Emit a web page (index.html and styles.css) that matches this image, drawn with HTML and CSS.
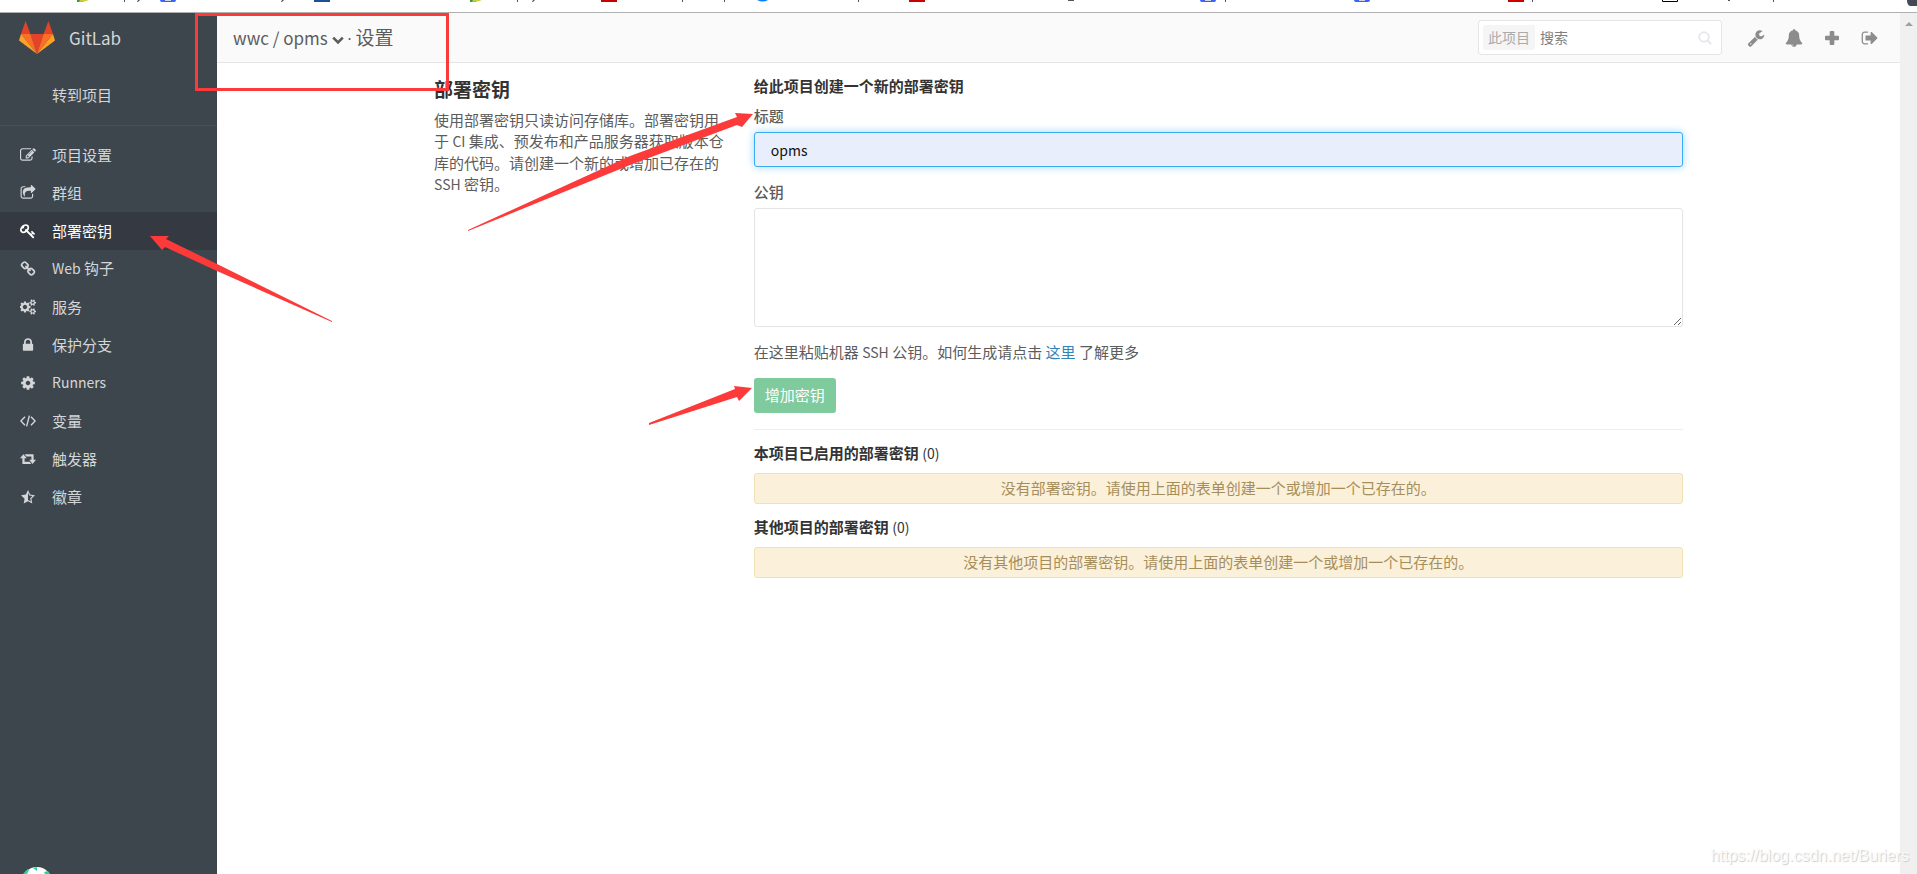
FILE: index.html
```html
<!DOCTYPE html>
<html lang="zh-CN">
<head>
<meta charset="utf-8">
<title>部署密钥 · GitLab</title>
<link rel="stylesheet" href="styles.css">
</head>
<body>
<svg class="defs" aria-hidden="true">
  <symbol id="edit" viewBox="0 0 1792 1792"><path d="M888 1184l116-116-152-152-116 116v56h96v96h56zm440-720q-16-16-33 1l-350 350q-17 17-1 33t33-1l350-350q17-17 1-33zm80 594v190q0 119-84.500 203.500t-203.500 84.500h-832q-119 0-203.500-84.500t-84.500-203.500v-832q0-119 84.500-203.500t203.500-84.500h832q63 0 117 25 15 7 18 23 3 17-9 29l-49 49q-14 14-32 8-23-6-45-6h-832q-66 0-113 47t-47 113v832q0 66 47 113t113 47h832q66 0 113-47t47-113v-126q0-13 9-22l64-64q15-15 35-7t20 29zm-96-738l288 288-672 672h-288v-288zm444 132l-92 92-288-288 92-92q28-28 68-28t68 28l152 152q28 28 28 68t-28 68z"/></symbol>
  <symbol id="share" viewBox="0 0 1792 1792"><path d="M1472 989v259q0 119-84.500 203.500t-203.500 84.500h-832q-119 0-203.500-84.500t-84.500-203.500v-832q0-119 84.500-203.500t203.500-84.500h255q13 0 22.500 9.500t9.500 22.500q0 27-26 32-77 26-133 60-10 4-16 4h-112q-66 0-113 47t-47 113v832q0 66 47 113t113 47h832q66 0 113-47t47-113v-214q0-19 18-29 28-13 54-37 16-16 35-8 21 9 21 29zm237-496l-384 384q-18 19-45 19-12 0-25-5-39-17-39-59v-192h-160q-323 0-438 131-119 137-74 473 3 23-20 34-8 2-12 2-16 0-26-13-10-14-21-31t-39.500-68.500-49.500-99.500-38.500-114-17.500-122q0-49 3.500-91t14-90 28-88 47-81.500 68.500-74 94.500-61.500 124.500-48.500 159.500-30.500 196.500-11h160v-192q0-42 39-59 13-5 25-5 26 0 45 19l384 384q19 19 19 45t-19 45z"/></symbol>
  <symbol id="key" viewBox="0 0 1792 1792"><path d="M832 512q0-80-56-136t-136-56-136 56-56 136q0 42 19 83-41-19-83-19-80 0-136 56t-56 136 56 136 136 56 136-56 56-136q0-42-19-83 41 19 83 19 80 0 136-56t56-136zm851 704q0 17-49 66t-66 49q-9 0-28.500-16t-36.500-33-38.500-40-24.500-26l-96 96 220 220q28 28 28 68 0 42-39 81t-81 39q-40 0-68-28l-671-671q-176 131-365 131-163 0-265.500-102.500t-102.500-265.500q0-160 95-313t248-248 313-95q163 0 265.500 102.500t102.500 265.500q0 189-131 365l355 355 96-96q-3-3-26-24.500t-40-38.500-33-36.500-16-28.500q0-17 49-66t66-49q13 0 23 10 6 6 46 44.500t82 79.500 86.500 86 73 78 28.500 41z"/></symbol>
  <symbol id="link" viewBox="0 0 1792 1792"><path d="M1520 1216q0-40-28-68l-208-208q-28-28-68-28-42 0-72 32 3 3 19 18.500t21.500 21.500 15 19 13 25.500 3.500 27.500q0 40-28 68t-68 28q-15 0-27.500-3.500t-25.500-13-19-15-21.500-21.500-18.500-19q-33 31-33 73 0 40 28 68l206 207q27 27 68 27 40 0 68-26l147-146q28-28 28-67zm-703-705q0-40-28-68l-206-207q-28-28-68-28-39 0-68 27l-147 146q-28 28-28 67 0 40 28 68l208 208q27 27 68 27 42 0 72-31-3-3-19-18.500t-21.500-21.500-15-19-13-25.500-3.500-27.500q0-40 28-68t68-28q15 0 27.500 3.500t25.500 13 19 15 21.500 21.500 18.500 19q33-31 33-73zm895 705q0 120-85 203l-147 146q-83 83-203 83-121 0-204-85l-206-207q-83-83-83-203 0-123 88-209l-88-88q-86 88-208 88-120 0-204-84l-208-208q-84-84-84-204t85-203l147-146q83-83 203-83 121 0 204 85l206 207q83 83 83 203 0 123-88 209l88 88q86-88 208-88 120 0 204 84l208 208q84 84 84 204z"/></symbol>
  <symbol id="cogs" viewBox="0 0 1856 1792"><path d="M832 896q0-106-75-181t-181-75-181 75-75 181 75 181 181 75 181-75 75-181zm768 512q0-52-38-90t-90-38-90 38-38 90q0 53 37.500 90.500t90.500 37.500 90.500-37.500 37.500-90.500zm0-1024q0-52-38-90t-90-38-90 38-38 90q0 53 37.500 90.500t90.500 37.500 90.500-37.500 37.500-90.500zm-384 421v185q0 10-7 19.500t-16 10.500l-155 24q-11 35-32 76 34 48 90 115 7 11 7 20 0 12-7 19-23 30-82.500 89.500t-78.500 59.500q-11 0-21-7l-115-90q-37 19-77 31-11 108-23 155-7 24-30 24h-186q-11 0-20-7.500t-10-17.500l-23-153q-34-10-75-31l-118 89q-7 7-20 7-11 0-21-8-144-133-144-160 0-9 7-19 10-14 41-53t47-61q-23-44-35-82l-152-24q-10-1-17-9.500t-7-19.500v-185q0-10 7-19.500t16-10.500l155-24q11-35 32-76-34-48-90-115-7-11-7-20 0-12 7-20 22-30 82-89t79-59q11 0 21 7l115 90q34-18 77-32 11-108 23-154 7-24 30-24h186q11 0 20 7.500t10 17.500l23 153q34 10 75 31l118-89q8-7 20-7 11 0 21 8 144 133 144 160 0 8-7 19-12 16-42 54t-45 60q23 48 34 82l152 23q10 2 17 10.500t7 19.500zm640 533v140q0 16-149 31-12 27-30 52 51 113 51 138 0 4-4 7-122 71-124 71-8 0-46-47t-52-68q-20 2-30 2t-30-2q-14 21-52 68t-46 47q-2 0-124-71-4-3-4-7 0-25 51-138-18-25-30-52-149-15-149-31v-140q0-16 149-31 13-29 30-52-51-113-51-138 0-4 4-7 4-2 35-20t59-34 30-16q8 0 46 46.500t52 67.500q20-2 30-2t30 2q51-71 92-112l6-2q4 0 124 70 4 3 4 7 0 25-51 138 17 23 30 52 149 15 149 31zm0-1024v140q0 16-149 31-12 27-30 52 51 113 51 138 0 4-4 7-122 71-124 71-8 0-46-47t-52-68q-20 2-30 2t-30-2q-14 21-52 68t-46 47q-2 0-124-71-4-3-4-7 0-25 51-138-18-25-30-52-149-15-149-31v-140q0-16 149-31 13-29 30-52-51-113-51-138 0-4 4-7 4-2 35-20t59-34 30-16q8 0 46 46.500t52 67.500q20-2 30-2t30 2q51-71 92-112l6-2q4 0 124 70 4 3 4 7 0 25-51 138 17 23 30 52 149 15 149 31z"/></symbol>
  <symbol id="lock" viewBox="0 0 1792 1792"><path d="M640 768h512v-192q0-106-75-181t-181-75-181 75-75 181v192zm832 96v576q0 40-28 68t-68 28h-960q-40 0-68-28t-28-68v-576q0-40 28-68t68-28h32v-192q0-184 132-316t316-132 316 132 132 316v192h32q40 0 68 28t28 68z"/></symbol>
  <symbol id="cog" viewBox="0 0 1792 1792"><path d="M1152 896q0-106-75-181t-181-75-181 75-75 181 75 181 181 75 181-75 75-181zm512-109v222q0 12-8 23t-20 13l-185 28q-19 54-39 91 35 50 107 138 10 12 10 25t-9 23q-27 37-99 108t-94 71q-12 0-26-9l-138-108q-44 23-91 38-16 136-29 186-7 28-36 28h-222q-14 0-24.500-8.500t-11.500-21.500l-28-184q-49-16-90-37l-141 107q-10 9-25 9-14 0-25-11-126-114-165-168-7-10-7-23 0-12 8-23 15-21 51-66.500t54-70.500q-27-50-41-99l-183-27q-13-2-21-12.500t-8-23.500v-222q0-12 8-23t19-13l186-28q14-46 39-92-40-57-107-138-10-12-10-24 0-10 9-23 26-36 98.500-107.500t94.500-71.500q13 0 26 10l138 107q44-23 91-38 16-136 29-186 7-28 36-28h222q14 0 24.500 8.500t11.500 21.500l28 184q49 16 90 37l142-107q9-9 24-9 13 0 25 10 129 119 165 170 7 8 7 22 0 12-8 23-15 21-51 66.500t-54 70.500q26 50 41 98l183 28q13 2 21 12.500t8 23.500z"/></symbol>
  <symbol id="code" viewBox="0 0 16 16"><path d="M5 3.800L.9 8 5 12.200M11 3.800L15.100 8 11 12.200M9.400 2.600L6.600 13.400" fill="none" stroke="currentColor" stroke-width="1.400"/></symbol>
  <symbol id="retweet" viewBox="0 0 16 16"><path d="M3.400 3.200L6.800 7.300H4.600v3.400h5l1.800 2.200H2.900q-.5 0-.5-.5V7.300H0zM4.600 3.200h8.500q.5 0 .5.500v5.100H16l-3.400 4.100-3.400-4.100h2.200V5.400h-5z"/></symbol>
  <symbol id="star" viewBox="0 0 16 16"><path fill-rule="evenodd" d="M8 1l2.100 4.500 4.900.7-3.600 3.500.9 4.900L8 12.300l-4.300 2.300.9-4.900L1 6.200l4.900-.7zM8 3.700v7.200l2.800 1.500-.6-3.100 2.300-2.200-3.200-.5z"/></symbol>
  <symbol id="wrench" viewBox="0 0 1792 1792"><path d="M448 1472q0-26-19-45t-45-19-45 19-19 45 19 45 45 19 45-19 19-45zm644-420l-682 682q-37 37-90 37-52 0-91-37l-106-108q-38-36-38-90 0-53 38-91l681-681q39 98 114.500 173.500t173.500 114.500zm634-435q0 39-23 106-47 134-164.500 217.500t-258.500 83.500q-185 0-316.500-131.500t-131.500-316.500 131.500-316.500 316.500-131.500q58 0 121.500 16.500t107.500 46.500q16 11 16 28t-16 28l-293 169v224l193 107q5-3 79-48.500t135.500-81 70.500-35.500q15 0 23.500 10t8.500 25z"/></symbol>
  <symbol id="bell" viewBox="0 0 1792 1792"><path d="M912 1696q0-16-16-16-59 0-101.500-42.500t-42.500-101.500q0-16-16-16t-16 16q0 73 51.500 124.500t124.500 51.500q16 0 16-16zm816-288q0 52-38 90t-90 38h-448q0 106-75 181t-181 75-181-75-75-181h-448q-52 0-90-38t-38-90q50-42 91-88t85-119.500 74.500-158.500 50-206 19.500-260q0-152 117-282.500t307-158.500q-8-19-8-39 0-40 28-68t68-28 68 28 28 68q0 20-8 39 190 28 307 158.500t117 282.500q0 139 19.500 260t50 206 74.500 158.500 85 119.500 91 88z"/></symbol>
  <symbol id="plus" viewBox="0 0 18 18"><path d="M7.700 2h2.600q1 0 1 1v3.700H15q1 0 1 1v2.600q0 1-1 1h-3.700V15q0 1-1 1H7.700q-1 0-1-1v-3.700H3q-1 0-1-1V7.700q0-1 1-1h3.700V3q0-1 1-1z"/></symbol>
  <symbol id="signout" viewBox="0 0 1792 1792"><path d="M704 1440q0 4 1 20t.500 26.500-3 23.500-10 19.500-20.500 6.500h-320q-119 0-203.500-84.500t-84.500-203.500v-704q0-119 84.500-203.500t203.500-84.500h320q13 0 22.500 9.500t9.500 22.500q0 4 1 20t.5 26.500-3 23.500-10 19.500-20.500 6.500h-320q-66 0-113 47t-47 113v704q0 66 47 113t113 47h312l11.500 1 11.500 3 8 5.500 7 9 2 13.500zm928-544q0 26-19 45l-544 544q-19 19-45 19t-45-19-19-45v-288h-448q-26 0-45-19t-19-45v-384q0-26 19-45t45-19h448v-288q0-26 19-45t45-19 45 19l544 544q19 19 19 45z"/></symbol>
</svg>

<div class="browser-strip">
  <svg class="strip-art" width="1917" height="12" aria-hidden="true">
    <path fill="#3a9b3a" d="M77 0h6v2h-6zM470 0h6v2h-6z"/><path fill="#c5cf3f" d="M80 0h9q-4 2-10 2zM473 0h9q-4 2-10 2z"/>
    <path fill="#3b62f0" d="M160 0h16q0 2-2 2h-12q-2 0-2-2zM1200 0h16q0 2-2 2h-12q-2 0-2-2zM1354 0h16q0 2-2 2h-12q-2 0-2-2z"/>
    <path fill="#cfd4ec" d="M165 0h6v1h-6zM1205 0h6v1h-6zM1359 0h6v1h-6z"/>
    <path fill="#1a5296" d="M314 0h16v2h-16z"/><path fill="#0a7cff" d="M757 0h11q-5 3-11 0z"/>
    <path fill="#c80000" d="M601 0h16v2h-16zM909 0h16v2h-16zM1508 0h16v2h-16z"/>
    <path fill="#555" d="M124 0h1v2h-1zM138 0h2l-2 2h-1zM282 0h2l-2 2h-1zM517 0h1v2h-1zM533 0h2l-2 2h-1zM682 0h1v2h-1zM724 0h1v2h-1zM858 0h1v2h-1zM1068 0h6v1h-6zM1225 0h1v2h-1zM1532 0h1v2h-1zM1728 0h2v1h-2zM1773 0h1v2h-1z"/>
    <path fill="none" stroke="#000" d="M1662.500 0v1.500h15V0"/><path fill="#454855" d="M1907 0h10v6h-7q-3-1-3-6z"/>
  </svg>
</div>

<div class="app">
  <aside class="sidebar">
    <a class="brand" href="#">
      <svg width="36" height="34" viewBox="0 0 36 34" aria-hidden="true">
        <path fill="#e24329" d="M18 33L11.400 13h13.200zM6.600 0L2 13h9.400zM29.400 0L24.600 13H34z"/>
        <path fill="#fc6d26" d="M18 33L2 13h9.400zM18 33L34 13h-9.400z"/>
        <path fill="#fca326" d="M2 13L0 19.500 18 33zM34 13l2 6.500L18 33z"/>
      </svg>
      <span>GitLab</span>
    </a>
    <nav>
      <a class="item back" href="#">转到项目</a>
      <a class="item" href="#"><svg class="icon"><use href="#edit"/></svg>项目设置</a>
      <a class="item" href="#"><svg class="icon"><use href="#share"/></svg>群组</a>
      <a class="item active" href="#"><svg class="icon"><use href="#key"/></svg>部署密钥</a>
      <a class="item" href="#"><svg class="icon"><use href="#link"/></svg><span><span class="latin">Web</span> 钩子</span></a>
      <a class="item" href="#"><svg class="icon"><use href="#cogs"/></svg>服务</a>
      <a class="item" href="#"><svg class="icon"><use href="#lock"/></svg>保护分支</a>
      <a class="item" href="#"><svg class="icon"><use href="#cog"/></svg><span class="latin">Runners</span></a>
      <a class="item" href="#"><svg class="icon"><use href="#code"/></svg>变量</a>
      <a class="item" href="#"><svg class="icon"><use href="#retweet"/></svg>触发器</a>
      <a class="item" href="#"><svg class="icon"><use href="#star"/></svg>徽章</a>
    </nav>
    <svg class="avatar" width="30" height="7" viewBox="0 0 30 7" aria-hidden="true"><circle cx="15" cy="15" r="15" fill="#fff"/><path fill="#2fd39a" d="M1 7q2-3 5-5l1 1-2 4zM11 1l4-1 0 4zM22 5l4-1 2 3h-5z"/></svg>
  </aside>

  <div class="page">
    <header class="topbar">
      <h1 class="crumbs"><a href="#">wwc</a> / <a href="#">opms</a> <svg class="chevron" viewBox="0 0 10 8" aria-hidden="true"><path d="M1 2l4 4 4-4" fill="none" stroke="currentColor" stroke-width="2.200"/></svg> <span class="dot">·</span> <span class="crumb-cjk">设置</span></h1>
      <form class="search">
        <span class="scope">此项目</span>
        <input type="search" placeholder="搜索" aria-label="搜索">
        <svg class="search-icon" viewBox="0 0 14 14" aria-hidden="true"><circle cx="6" cy="6" r="4.800"/><path d="M9.500 9.500L13.200 13.200"/></svg>
      </form>
      <nav class="tools">
        <a href="#" aria-label="管理"><svg><use href="#wrench"/></svg></a>
        <a href="#" aria-label="通知"><svg><use href="#bell"/></svg></a>
        <a href="#" aria-label="新建"><svg><use href="#plus"/></svg></a>
        <a href="#" aria-label="退出"><svg><use href="#signout"/></svg></a>
      </nav>
    </header>

    <main class="content">
      <section class="intro">
        <h2>部署密钥</h2>
        <p>使用部署密钥只读访问存储库。部署密钥用于 <span class="latin">CI</span> 集成、预发布和产品服务器获取版本仓库的代码。请创建一个新的或增加已存在的 <span class="latin">SSH</span> 密钥。</p>
      </section>
      <section class="keys">
        <h3>给此项目创建一个新的部署密钥</h3>
        <form class="key-form">
          <label for="title">标题</label>
          <input id="title" type="text" value="opms">
          <label for="key-text">公钥</label>
          <textarea id="key-text"></textarea>
          <p>在这里粘贴机器 <span class="latin">SSH</span> 公钥。如何生成请点击 <a href="#">这里</a> 了解更多</p>
          <button type="button">增加密钥</button>
        </form>
        <hr>
        <h3>本项目已启用的部署密钥 <span class="count">(0)</span></h3>
        <div class="notice">没有部署密钥。请使用上面的表单创建一个或增加一个已存在的。</div>
        <h3>其他项目的部署密钥 <span class="count">(0)</span></h3>
        <div class="notice">没有其他项目的部署密钥。请使用上面的表单创建一个或增加一个已存在的。</div>
      </section>
    </main>
  </div>
  <div class="scrollbar"><svg width="8" height="4" viewBox="0 0 8 4" aria-hidden="true"><path fill="#a0a0a0" d="M4 0l4 4H0z"/></svg></div>
</div>

<svg class="marks" width="760" height="430" aria-hidden="true">
  <rect x="196.500" y="14.500" width="251" height="75" fill="none" stroke="#fd3a3a" stroke-width="3"/>
  <path fill="#fd3a3a" d="M150 236h19l-3 3 51 25 115 57v1l-115-51-52-24-3 3zM753 114l-18-1 2 4-107 39L468 230v1l162-66 107-40 5 2zM752 388l-18-2 1 3-86 34v2l88-28 2 4z"/>
</svg>
<div class="watermark">https://blog.csdn.net/Buriers</div>
</body>
</html>
```
FILE: styles.css
```css
* { box-sizing: border-box; }
body {
  margin: 0;
  height: 100vh;
  display: flex;
  flex-direction: column;
  overflow: hidden;
  position: relative;
  background: #fff;
  color: #5c5c5c;
  font: 15px/21px "Noto Sans CJK SC", sans-serif;
}
a { color: inherit; text-decoration: none; }
h1, h2, h3, p { margin: 0; }
.defs { position: absolute; width: 0; height: 0; }
.latin, .count { font-size: 14px; }

.browser-strip { height: 13px; border-bottom: 1px solid #b0b0b0; overflow: hidden; flex: none; }
.strip-art { display: block; }
.app { flex: 1; min-height: 0; display: flex; }

.sidebar {
  width: 217px;
  flex: none;
  display: flex;
  flex-direction: column;
  background: #3e464d;
  color: #d4d6d8;
}
.brand { display: flex; align-items: center; gap: 14px; height: 50px; padding-left: 19px; font-size: 17px; }
.brand span { padding-bottom: 2px; }
.item { display: flex; align-items: center; height: 38px; padding: 0 0 2px 20px; }
.item.back { height: 63px; padding: 0 0 0 52px; margin-bottom: 10px; border-bottom: 1px solid #495158; }
.item.active { background: #353a42; color: #fff; }
.icon { width: 16px; height: 16px; margin: 2px 16px 0 0; fill: currentColor; }
.avatar { margin: auto 0 0 22px; }

.page { flex: 1; min-width: 0; }
.topbar {
  display: flex;
  align-items: center;
  height: 50px;
  padding: 0 11px 0 16px;
  background: #fafafa;
  border-bottom: 1px solid #e5e5e5;
}
.crumbs { flex: 1; font-size: 17px; font-weight: 400; line-height: 28px; }
.crumb-cjk { font-size: 19px; }
.dot { font-family: "Open Sans", sans-serif; }
.chevron { width: 12px; height: 10px; }
.search {
  display: flex;
  align-items: center;
  width: 244px;
  height: 35px;
  padding: 0 9px 0 4px;
  background: #fff;
  border: 1px solid #e5e5e5;
  border-radius: 3px;
}
.scope { padding: 2px 5px; background: #f5f5f5; color: #aaa; font-size: 14px; border-radius: 2px; }
.search input { flex: 1; min-width: 0; border: 0; padding: 0 5px; background: none; font: inherit; font-size: 14px; outline: none; }
.search input::placeholder { color: #7f7f7f; opacity: 1; }
.search-icon { width: 14px; height: 14px; fill: none; stroke: #e7e9ed; stroke-width: 2; }
.tools { display: flex; padding-left: 15px; }
.tools a { display: flex; justify-content: center; width: 38px; color: #8c8c8c; }
.tools svg { width: 18px; height: 18px; fill: currentColor; }

.content { display: grid; grid-template-columns: 1fr 3fr; max-width: 1279px; margin: 0 auto; }
.content > section { padding: 0 15px; }
.content > .intro { padding-right: 12px; }
h2 { color: #333; font-size: 19px; font-weight: 700; line-height: 26px; margin: 13px 0 7px; }
h3 { color: #333; font-size: 15px; font-weight: 700; line-height: 21px; margin: 12px 0 9px; }
.count { font-weight: 400; }
.key-form { display: flex; flex-direction: column; align-items: stretch; }
label { font-weight: 500; margin-bottom: 6px; }
.key-form input {
  height: 35px;
  padding: 0 16px;
  border: 1px solid #3aabf0;
  border-radius: 3px;
  background: #e8eefc;
  box-shadow: 0 0 8px #9fd6f8;
  color: #111;
  font: inherit;
  font-size: 14px;
  outline: none;
  margin-bottom: 14px;
}
.key-form textarea { height: 119px; border: 1px solid #e5e5e5; border-radius: 3px; resize: vertical; margin-bottom: 14px; outline: none; }
.key-form p a { color: #3084bb; }
.key-form button {
  align-self: flex-start;
  height: 35px;
  margin-top: 15px;
  padding: 0 11px 2px;
  border: 0;
  border-radius: 3px;
  background: #7fcb9d;
  color: #fff;
  font: inherit;
}
hr { border: 0; border-top: 1px solid #eee; margin: 16px 0 12px; }
.notice { height: 31px; margin-bottom: 12px; padding: 3px; text-align: center; color: #a68e5b; background: #fbf0d9; border: 1px solid #f0e0b4; border-radius: 3px; }

.scrollbar { width: 17px; flex: none; background: #f0f0f0; padding-left: 5px; line-height: 14px; }
.marks { position: absolute; left: 0; top: 0; pointer-events: none; }
.watermark { position: absolute; right: 8px; bottom: 8px; color: #fafafa; font: 16px/20px "Liberation Sans", sans-serif; text-shadow: 1px 1px 1px #ccc; }
```
